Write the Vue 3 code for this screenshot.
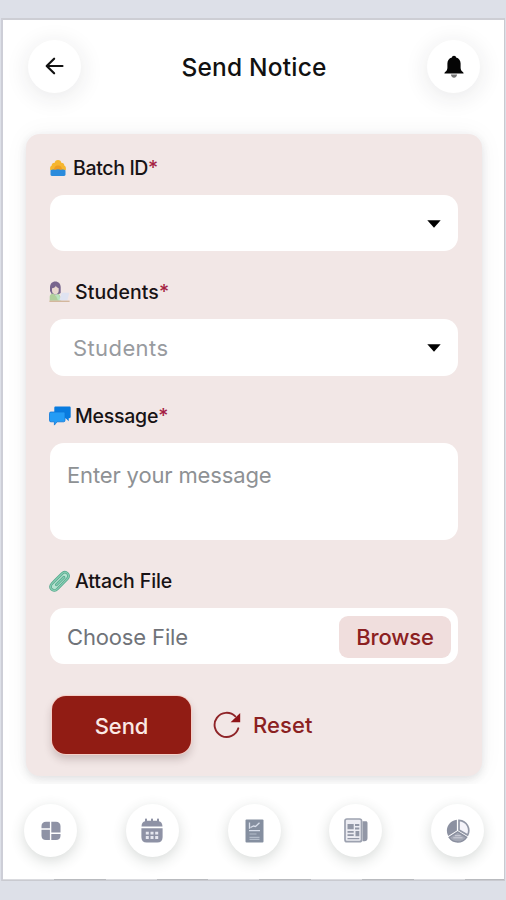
<script setup>
import { ref } from 'vue'

const message = ref('')
</script>

<template>
  <div class="page">
    <main class="screen">
      <header class="header">
        <button class="round" aria-label="Back">
          <svg width="19" height="19" viewBox="0 0 20 20" fill="none" stroke="#111" stroke-width="2.3" stroke-linecap="round" stroke-linejoin="round">
            <path d="M18.400 9.500H2M9.600 1.800L1.800 9.500l7.800 7.700" />
          </svg>
        </button>
        <h1>Send Notice</h1>
        <button class="round" aria-label="Notifications">
          <svg width="20" height="24" viewBox="0 0 20 24">
            <path fill="#050505" d="M10 .7c1.200 0 2 .7 2.100 1.800 2.900.8 4.500 3.100 4.500 6.100v4.100c0 2 .8 3.100 2.300 4.300.5.400.7.800.7 1.600H.4c0-.8.2-1.200.7-1.600 1.500-1.200 2.300-2.300 2.300-4.300V8.600c0-3 1.600-5.300 4.500-6.100C8 1.400 8.800.7 10 .7z" />
            <path fill="#777" d="M6.900 19.600h6.200c-.2 1.900-1.400 3.100-3.100 3.100s-2.900-1.200-3.100-3.100z" />
          </svg>
        </button>
      </header>

      <form class="card" @submit.prevent>
        <div class="label batch">
          <svg width="16" height="16" viewBox="0 0 16 16">
            <path fill="#f6b62f" d="M8 0c1.900 0 3.200 1.200 3.300 2.800 2 .1 3.100 1.200 3 2.700.9.500 1.600 1.500 1.600 2.700V10H.1V8.200c0-1.200.7-2.200 1.600-2.700-.1-1.500 1-2.600 3-2.700C4.800 1.200 6.100 0 8 0z" />
            <path fill="#ee9d22" d="M4.600 7.500c.7-1.300 1.800-1.900 3.400-1.900s2.700.6 3.400 1.900l1.200 2.500H3.400z" />
            <path fill="#2b8bdc" d="M.5 10.200c1.800-1 3.300-.8 4.400-.3 2-.9 4.200-.9 6.200 0 1.100-.5 2.600-.7 4.400.3v4.300c0 .9-.5 1.400-1.400 1.400H1.900c-.9 0-1.400-.5-1.400-1.400z" />
          </svg>
          <span>Batch ID</span><i class="star">*</i>
        </div>
        <div class="field select"><span></span>
          <svg width="14" height="8" viewBox="0 0 14 8"><path d="M.3.200h13.400L7 7.700z" /></svg>
        </div>

        <div class="label students">
          <svg width="21" height="22" viewBox="0 0 21 22">
            <path fill="#78658d" d="M1 10V6.500C1 2.700 3.100.5 6.300.5s5.400 2.200 5.400 6V12l-2.500 1.500H3z" />
            <path fill="#e9d8cf" d="M3 7.200c2-.2 3.200-1.200 3.900-2.500.5 1.300 1.400 2.100 2.800 2.500v2.500c0 2.100-1.500 3.600-3.300 3.600S3 11.800 3 9.700z" />
            <path fill="#b0cf9c" d="M.7 19.800v-4.100c0-2 1.400-3 3.700-3.300l2 2 2.600-1.700c1.800.9 2.800 2.500 3.300 7.100z" />
            <path fill="#b9e4bf" d="M6.500 13.500l3 .2 2.600 4.500-3 1.600z" />
            <path fill="#dfe3f1" d="M12.700 11.800h7.700l-2.100 7.800h-8z" />
            <path fill="#d3b79d" d="M.4 19.600h20.200v1.400H.4z" />
          </svg>
          <span>Students</span><i class="star">*</i>
        </div>
        <div class="field select tall"><span class="placeholder">Students</span>
          <svg width="14" height="8" viewBox="0 0 14 8"><path d="M.3.200h13.400L7 7.700z" /></svg>
        </div>

        <div class="label message">
          <svg width="22" height="20" viewBox="0 0 22 20">
            <path fill="#087bdf" d="M6.700.5h13.600c.9 0 1.400.5 1.400 1.400v8.900c0 .9-.5 1.400-1.400 1.400h-.6v3l-3-3h-10c-.9 0-1.400-.5-1.400-1.400V1.900c0-.9.500-1.400 1.400-1.400z" />
            <path fill="#249cf5" stroke="#0c77d8" stroke-width=".8" d="M1.900 6h12.700c.9 0 1.400.5 1.400 1.400v7c0 .9-.5 1.400-1.400 1.400H8l-2.600 3.300v-3.300H1.900c-.9 0-1.400-.5-1.400-1.400v-7C.5 6.500 1 6 1.900 6z" />
          </svg>
          <span>Message</span><i class="star">*</i>
        </div>
        <textarea v-model="message" class="field" placeholder="Enter your message"></textarea>

        <div class="label attach">
          <svg width="22" height="22" viewBox="0 0 22 22" fill="none" stroke-linecap="round" stroke-linejoin="round">
            <path stroke="#b5e3d0" stroke-width="5" d="M5.500 16.500L16 6" />
            <path stroke="#4fa489" stroke-width="2.700" d="M5.800 10.800l7.100-7.100c3.800-3.800 9.100 1.200 5.400 5.100L8.500 18.900c-4.200 4.100-9.600-1.200-5.500-5.300l2.800-2.800M14.900 7.200l-7.500 7.600" />
            <path stroke="#86ceb2" stroke-width="1.300" d="M5.800 10.800l7.100-7.100c3.800-3.800 9.100 1.200 5.400 5.100L8.500 18.900c-4.200 4.100-9.600-1.200-5.500-5.300l2.800-2.800M14.900 7.200l-7.500 7.600" />
          </svg>
          <span>Attach File</span>
        </div>
        <div class="field file">
          <span>Choose File</span>
          <button type="button" class="browse">Browse</button>
        </div>

        <div class="actions">
          <button class="send">Send</button>
          <button type="button" class="reset">
            <svg width="28" height="28" viewBox="0 0 28 28">
              <path fill="none" stroke="#8f2428" stroke-width="1.900" stroke-linecap="round" d="M25.300 17.300A12.100 12.100 0 1 1 22.300 5.400" />
              <path fill="#8f1418" d="M27.200 2v9.300h-9.600z" />
            </svg>
            <span>Reset</span>
          </button>
        </div>
      </form>

      <nav class="nav">
        <button class="round" aria-label="Dashboard">
          <svg width="20" height="20" viewBox="0 0 20 20" fill="#8e92a5">
            <path d="M5 .7h3.900v6.600H.5V5C.5 2.300 2.200.7 5 .7zM10.300.7H15c2.800 0 4.500 1.600 4.500 4.300v6.400h-9.200zM.5 8.800h8.400v10.300H5c-2.800 0-4.500-1.600-4.500-4.300zM10.300 12.900h9.200v1.900c0 2.700-1.700 4.300-4.500 4.300h-4.700z" />
          </svg>
        </button>
        <button class="round" aria-label="Calendar">
          <svg width="22" height="25" viewBox="0 0 22 25">
            <path fill="#8e92a5" d="M4 3.200V1.500C4 .9 4.400.5 5 .5s1 .4 1 1v1.200h4V1.500c0-.6.4-1 1-1s1 .4 1 1v1.200h4V1.500c0-.6.4-1 1-1s1 .4 1 1v1.700c2 .4 3.300 2 3.500 5.200H.5C.7 5.200 2 3.600 4 3.200zM.4 10.300h21.200v8.900c0 3.400-1.900 5.300-5.300 5.300H5.700c-3.400 0-5.300-1.900-5.300-5.300z" />
            <path fill="#e6e7ef" d="M4.800 13.700h3v2.900h-3zM9.500 13.700h3v2.900h-3zM14.200 13.700h3v2.900h-3zM4.800 18h3v2.900h-3zM9.500 18h3v2.900h-3zM14.200 18h3v2.900h-3z" />
          </svg>
        </button>
        <button class="round" aria-label="Report">
          <svg width="19" height="24" viewBox="0 0 19 24">
            <rect x=".5" y=".5" width="18" height="23" rx="1" fill="#858fa0" />
            <path fill="none" stroke="#d8deea" stroke-width="1.300" d="M4.500 3.600v6.200M5.500 8.500l3-1.500 2 .5 4-3.700M4 11.700h11" />
            <path fill="none" stroke="#b4bdca" stroke-width="1.200" d="M4.500 15h7M4.500 18.300h10M4.500 20.300h10" />
          </svg>
        </button>
        <button class="round" aria-label="News">
          <svg width="24" height="25" viewBox="0 0 24 25">
            <rect x="1" y="1" width="16.500" height="22.700" rx="2" fill="#ececf2" stroke="#9da2b0" stroke-width="1.700" />
            <path fill="#9297a6" d="M18.500 3.200h3.300c1.100 0 1.700.6 1.700 1.700v15.400c0 1.700-1.100 3-3 3h-2zM3.500 6h6.200v5.200H3.500zM11 6h4.300v2H11zM11 9.500h4.300v2H11zM3.500 13h6.200v1.800H3.500zM3.500 16.200h6.200V18H3.500zM11.500 13h3.800v5.300h-3.800zM3.500 20h11.800v1.300H3.500z" />
          </svg>
        </button>
        <button class="round" aria-label="Statistics">
          <svg width="24" height="24" viewBox="0 0 24 24">
            <path fill="#8c91a1" d="M10.900.8v10.700L2.200 17C-1.500 9.500 2.800 1.900 10.900.8z" />
            <path fill="#f5f4fa" stroke="#9297a6" stroke-width="1.700" d="M13 1.400c8.200.6 11.700 8.500 8.600 14.700L13 11z" />
            <path fill="#a3a7b4" stroke="#898e9e" stroke-width="1.400" d="M3.200 18.400l8.500-5.600 8.900 5.500c-4.500 6.300-13.300 6.200-17.400.1z" />
            <path fill="none" stroke="#cfd0da" stroke-width="1" d="M7.300 18.800h9.200M9 16.700h5.700" />
          </svg>
        </button>
      </nav>
    </main>
  </div>
</template>

<style>
body { margin: 0; }
</style>

<style scoped>
* { box-sizing: border-box; }
button { border: 0; padding: 0; font: inherit; color: inherit; background: none; }
svg { display: block; flex: none; }
.page {
  width: 506px;
  height: 900px;
  padding: 18px 0 19px 1px;
  background: #dde0e8;
  font-family: Inter, "Liberation Sans", sans-serif;
  overflow: hidden;
}
.screen {
  width: 504px;
  height: 863px;
  display: flex;
  flex-direction: column;
  background: #fff;
  border-style: solid;
  border-width: 2px 1px 1px 2px;
  border-color: #cdced4 #c9cad0 #c9cad0 #cdced7;
  overflow: hidden;
}
.header {
  height: 114px;
  flex: none;
  padding: 20px 24px 0 25px;
  display: flex;
  align-items: flex-start;
  justify-content: space-between;
}
.header h1 {
  margin: 0;
  height: 53px;
  display: flex;
  align-items: center;
  font-size: 24.500px;
  font-weight: 500;
  letter-spacing: .2px;
  color: #111;
}
.round {
  width: 53px;
  height: 53px;
  flex: none;
  border-radius: 50%;
  display: flex;
  align-items: center;
  justify-content: center;
  background: #fff;
  box-shadow: 0 4px 24px rgba(40, 40, 50, .11);
}
.card {
  width: 456px;
  height: 642px;
  flex: none;
  margin-left: 23px;
  padding: 22px 24px 0;
  border-radius: 14px;
  background: #f2e7e6;
  box-shadow: 0 3px 8px rgba(50, 50, 50, .12), 0 0 24px rgba(30, 30, 60, .05);
}
.label {
  height: 24px;
  margin: 28px 0 15px -1px;
  display: flex;
  align-items: center;
  font-size: 19.500px;
  font-weight: 500;
  color: #181315;
  white-space: nowrap;
}
.label svg { margin-right: 4px; }
.label.batch { margin-top: 0; letter-spacing: -.35px; }
.label.batch svg { margin: 0 7px 0 1px; }
.label.students { margin-top: 29px; letter-spacing: .1px; }
.label.students svg { margin-right: 5px; }
.label.message { letter-spacing: -.25px; }
.label.attach { margin-top: 29px; letter-spacing: -.1px; }
.star { font-style: normal; color: #a51e43; }
.field {
  width: 408px;
  height: 56px;
  border-radius: 14px;
  background: #fff;
  display: flex;
  align-items: center;
  justify-content: space-between;
}
.select { padding: 1px 17px 0 23px; }
.field.tall { height: 57px; }
.placeholder { font-size: 22px; letter-spacing: .4px; color: #989b9f; }
textarea.field {
  display: block;
  height: 97px;
  margin: 0;
  padding: 19px 17px;
  border: 0;
  outline: 0;
  resize: none;
  font: 22px/27px Inter, "Liberation Sans", sans-serif;
  letter-spacing: -.15px;
}
textarea::placeholder { color: #8e9194; opacity: 1; }
.file { padding: 1px 7px 0 17px; font-size: 22px; letter-spacing: -.15px; color: #707379; }
.browse {
  width: 112px;
  height: 42px;
  border-radius: 9px;
  background: #f0dedd;
  color: #8b2021;
  font-weight: 500;
  letter-spacing: -.2px;
}
.actions { display: flex; align-items: center; margin-top: 32px; }
.send {
  width: 139px;
  height: 58px;
  padding-top: 1px;
  margin-left: 2px;
  border-radius: 14px;
  background: #911c14;
  color: #fbe9e5;
  font-size: 22px;
  font-weight: 500;
  letter-spacing: -.15px;
  box-shadow: 0 0 0 1px #f6cfc8, 0 5px 9px rgba(60, 30, 30, .22);
}
.reset {
  display: flex;
  align-items: center;
  gap: 12px;
  margin-left: 22px;
  font-size: 22px;
  font-weight: 500;
  letter-spacing: .1px;
  color: #8b2021;
}
.nav {
  flex: 1;
  margin-top: 8px;
  padding: 20px 20px 0 21px;
  display: flex;
  justify-content: space-between;
  background: repeating-linear-gradient(90deg, #dadbdf 0 51px, #b9bbbf 51px 102.700px) bottom / 100% 1px no-repeat, #fff;
}
.nav .round { box-shadow: 0 4px 14px rgba(50, 65, 55, .19); }
</style>
